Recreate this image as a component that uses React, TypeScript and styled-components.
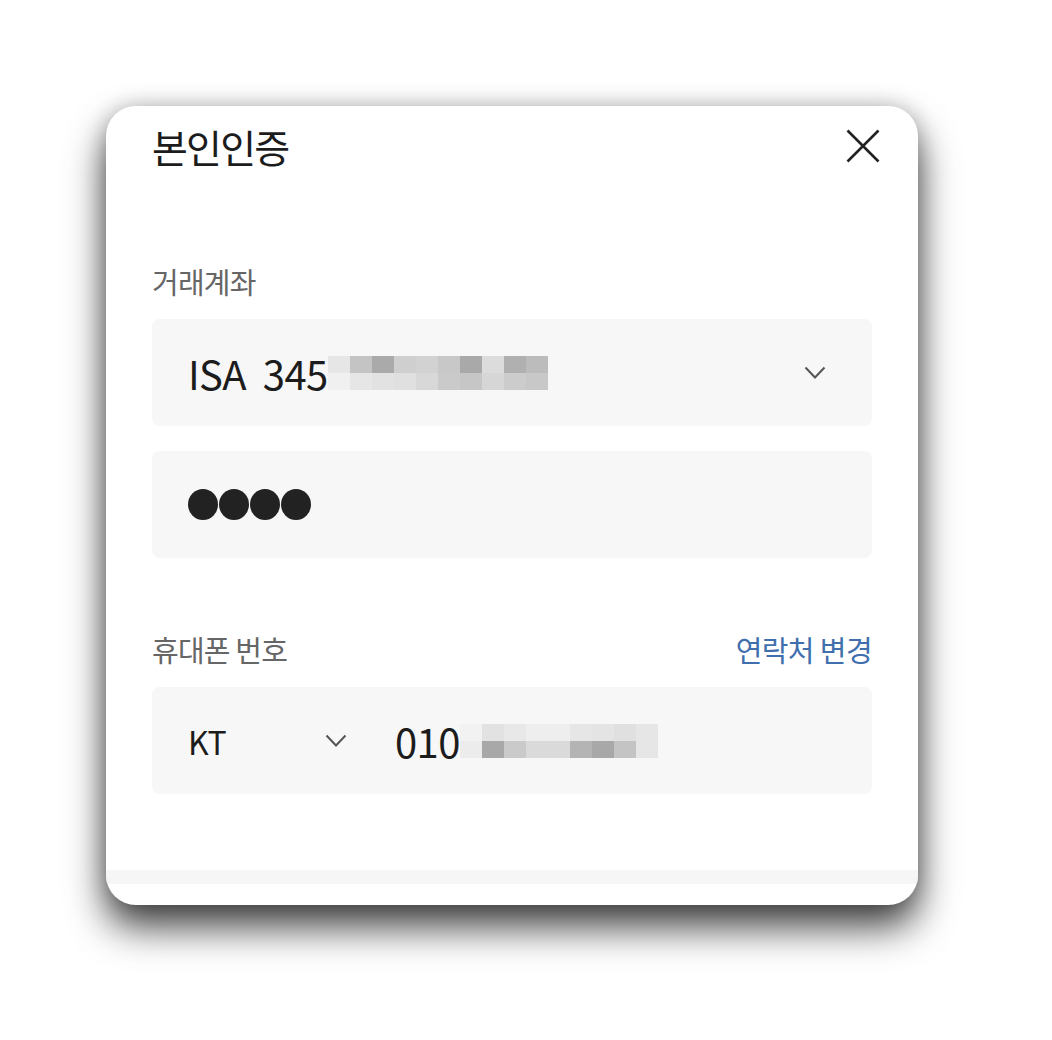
import styled, { createGlobalStyle } from "styled-components";

const GlobalStyle = createGlobalStyle`
  html, body {
    margin: 0;
    padding: 0;
    background: #ffffff;
  }
  body {
    font-family: "Noto Sans CJK KR", "Noto Sans", sans-serif;
    color: #222;
  }
`;

const Page = styled.div`
  width: 1052px;
  height: 1040px;
  padding: 106px 0 0 106px;
  box-sizing: border-box;
`;

const Card = styled.section`
  width: 812px;
  height: 799px;
  box-sizing: border-box;
  background: #fff;
  border-radius: 30px;
  box-shadow: 0 22px 38px rgba(0, 0, 0, 0.74), 0 0 22px rgba(0, 0, 0, 0.2);
  display: flex;
  flex-direction: column;
  overflow: hidden;
`;

const Header = styled.header`
  display: flex;
  justify-content: space-between;
  align-items: center;
  padding: 9px 38px 0 46px;
  height: 62px;
`;

const Title = styled.h1`
  margin: 0;
  font-size: 39px;
  font-weight: 400;
  letter-spacing: -1.8px;
  line-height: 46px;
  color: #1c1c1c;
`;

const CloseButton = styled.button`
  border: 0;
  background: none;
  padding: 0;
  width: 34px;
  height: 34px;
  display: flex;
  cursor: pointer;
`;

const Body = styled.div`
  flex: 1;
  padding: 0 46px;
  display: flex;
  flex-direction: column;
`;

const LabelRow = styled.div<{ $top: number }>`
  display: flex;
  justify-content: space-between;
  align-items: center;
  margin-top: ${(p) => p.$top}px;
  height: 36px;
  margin-bottom: 20px;
`;

const Label = styled.span`
  font-size: 29px;
  letter-spacing: -0.8px;
  color: #666;
`;

const LinkText = styled.a`
  font-size: 29px;
  letter-spacing: -0.6px;
  color: #3f6fad;
  text-decoration: none;
`;

const Field = styled.div<{ $gap?: number }>`
  height: 107px;
  background: #f7f7f7;
  border-radius: 8px;
  display: flex;
  align-items: center;
  padding: 0 46px 0 36px;
  margin-top: ${(p) => p.$gap ?? 0}px;
`;

const Value = styled.span<{ $size: number }>`
  font-family: "Liberation Sans Narrow", "Noto Sans CJK KR", sans-serif;
  font-size: ${(p) => p.$size}px;
  letter-spacing: -0.6px;
  color: #1c1c1c;
  white-space: pre;
`;

const Spacer = styled.div`
  flex: 1;
`;

const Mosaic = styled.div`
  display: grid;
  grid-template-columns: repeat(var(--cols), 22px);
  grid-auto-rows: 17px;
  filter: blur(0.6px);
`;

const Cell = styled.span<{ $c: string }>`
  background: ${(p) => p.$c};
`;

const Dots = styled.div`
  display: flex;
  gap: 1px;
`;

const Dot = styled.span`
  width: 30px;
  height: 31px;
  border-radius: 50%;
  background: #222;
`;

const Carrier = styled.div`
  display: flex;
  align-items: center;
  width: 159px;
  margin-right: 48px;
  justify-content: space-between;
`;

const Footer = styled.div`
  height: 14px;
  background: #f6f6f6;
  margin-bottom: 21px;
`;

const Chevron = ({ w = 22 }: { w?: number }) => (
  <svg width={w} height={14} viewBox="0 0 22 14" fill="none">
    <path d="M1.5 1.5 L11 11.5 L20.5 1.5" stroke="#555" strokeWidth="2" />
  </svg>
);

const accountCells = [
  "#e6e6e6", "#c4c4c4", "#aaaaaa", "#cfcfcf", "#d2d2d2", "#c8c8c8", "#a9a9a9", "#dcdcdc", "#b0b0b0", "#bcbcbc",
  "#f0f0f0", "#e6e6e6", "#e2e2e2", "#e0e0e0", "#d8d8d8", "#cacaca", "#c6c6c6", "#d6d6d6", "#cccccc", "#c8c8c8",
];

const phoneCells = [
  "#f2f2f2", "#e2e2e2", "#e8e8e8", "#eeeeee", "#eeeeee", "#e6e6e6", "#e4e4e4", "#e0e0e0", "#e6e6e6",
  "#ececec", "#a8a8a8", "#cacaca", "#dadada", "#dadada", "#b4b4b4", "#a8a8a8", "#c4c4c4", "#e6e6e6",
];

const App = () => {
  return (
    <Page>
      <GlobalStyle />
      <Card>
        <Header>
          <Title>본인인증</Title>
          <CloseButton aria-label="닫기">
            <svg width="34" height="34" viewBox="0 0 34 34">
              <path d="M1.5 1.5 L32.5 32.5 M32.5 1.5 L1.5 32.5" stroke="#222" strokeWidth="2.6" />
            </svg>
          </CloseButton>
        </Header>
        <Body>
          <LabelRow $top={86}>
            <Label>거래계좌</Label>
          </LabelRow>
          <Field>
            <Value $size={40}>ISA  345</Value>
            <Mosaic style={{ ["--cols" as string]: 10 }}>
              {accountCells.map((c, i) => (
                <Cell key={i} $c={c} />
              ))}
            </Mosaic>
            <Spacer />
            <Chevron />
          </Field>
          <Field $gap={25}>
            <Dots>
              <Dot />
              <Dot />
              <Dot />
              <Dot />
            </Dots>
          </Field>
          <LabelRow $top={73}>
            <Label>휴대폰 번호</Label>
            <LinkText href="#">연락처 변경</LinkText>
          </LabelRow>
          <Field>
            <Carrier>
              <Value $size={32}>KT</Value>
              <Chevron w={22} />
            </Carrier>
            <Value $size={40}>010</Value>
            <Mosaic style={{ ["--cols" as string]: 9 }}>
              {phoneCells.map((c, i) => (
                <Cell key={i} $c={c} />
              ))}
            </Mosaic>
          </Field>
          <Spacer />
        </Body>
        <Footer />
      </Card>
    </Page>
  );
};

export default App;
